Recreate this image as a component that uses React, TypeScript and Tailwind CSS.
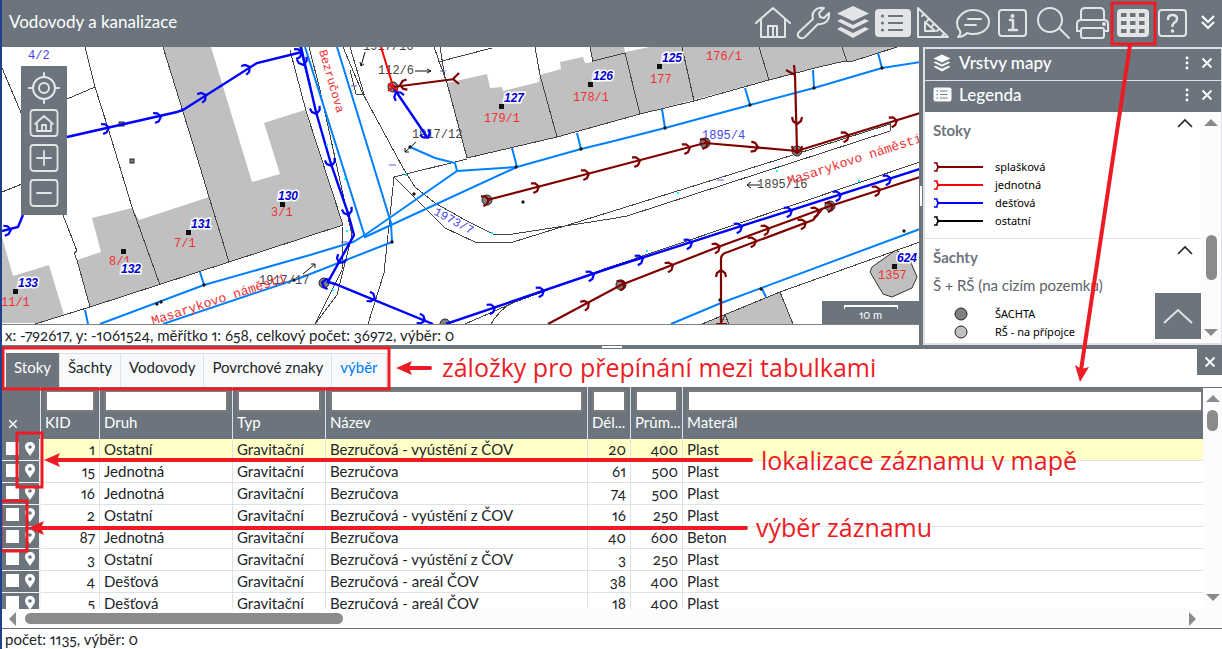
import React from "react";

const MAROON = "#800000";
const BLUE = "#0000ff";
const WATER = "#0080ff";

const S = { fill: "none", stroke: "#e2e4e6", strokeWidth: 2, strokeLinecap: "round", strokeLinejoin: "round" } as const;

const tools: { name: string; art: React.ReactNode }[] = [
  { name: "Domů", art: <path {...S} d="M3 23 20 8 37 23M8 19V37H32V19M15 37V26H24V37M20 27V37" /> },
  {
    name: "Nástroje",
    art: <path {...S} d="M6 32 20 19C18 12 23 7 31 8L26 13 27 17 31 18 36 13C37 20 32 25 25 24L12 37C8 40 2 36 6 32Z" />,
  },
  {
    name: "Vrstvy",
    art: (
      <g fill="#e2e4e6">
        <path d="M20 6 36 13.500 20 21 4 13.500Z" />
        <path d="M4 21 8 19 20 25 32 19 36 21 20 29Z" />
        <path d="M4 29 8 27 20 33 32 27 36 29 20 38Z" />
      </g>
    ),
  },
  {
    name: "Legenda",
    art: (
      <g>
        <rect x="2" y="9" width="36" height="28" rx="4" fill="#e2e4e6" />
        <path d="M15 16H30M15 23H30M15 30H30" stroke="#6c757d" strokeWidth="2" />
        <g fill="#6c757d"><circle cx="9.500" cy="16" r="1.600" /><circle cx="9.500" cy="23" r="1.600" /><circle cx="9.500" cy="30" r="1.600" /></g>
      </g>
    ),
  },
  { name: "Měření", art: <path {...S} d="M5 8V37H35ZM12 22V31H22ZM11 14 9 16M16 19 14 21M21 24 19 26M26 29 24 31M31 34 29 36" /> },
  { name: "Poznámky", art: <path {...S} d="M7 31C3 26 3 20 7 16 11 11 16 10 20 10 29 10 36 15 36 22 36 29 29 34 20 34 18 34 16 34 14 33 11 36 8 37 5 37 7 35 8 33 7 31ZM15 19H28M12 25H23" /> },
  { name: "Informace", art: <g {...S}><rect x="6" y="10" width="27" height="26" rx="3" /><path strokeWidth="2.500" d="M17 20H20V30M16 30H24" /><circle cx="19.500" cy="16" r="1" fill="#e2e4e6" /></g> },
  { name: "Hledat", art: <g {...S}><circle cx="17" cy="20" r="12" /><path d="M26 28 36 38" /></g> },
  { name: "Tisk", art: <g {...S}><path d="M8 20V12Q8 8 12 8H27Q31 8 31 12V20M8 31H4V24Q4 20 8 20H31Q35 20 35 24V31H31" /><rect x="8" y="28" width="23" height="10" rx="2" /><circle cx="31" cy="24" r="1" /></g> },
  {
    name: "Tabulky",
    art: (
      <g>
        <rect x="4" y="9" width="32" height="28" rx="4" fill="#e2e4e6" />
        <g fill="#6c757d">
          {[13, 21, 29].map((y) => [8, 17, 26].map((x) => <rect key={`${x}-${y}`} x={x} y={y} width="5.500" height="4" />))}
        </g>
      </g>
    ),
  },
  { name: "Nápověda", art: <g {...S}><rect x="6" y="10" width="27" height="26" rx="3" /><path strokeWidth="2.500" d="M15 19Q15 15 19.500 15 24 15 24 19 24 21 21 23 19.500 24 19.500 26" /><circle cx="19.500" cy="31" r=".8" fill="#e2e4e6" /></g> },
];

function Flow({ at, color }: { at: [number, number, number][]; color: string }) {
  return (
    <g fill="none" stroke={color} strokeWidth="2.200">
      {at.map(([x, y, a]) => (
        <path key={`${x}-${y}`} transform={`translate(${x} ${y}) rotate(${a})`} d="M-5-5-1-4 2 0-1 4-5 5" />
      ))}
    </g>
  );
}

function House({ n, x, y }: { n: string; x: number; y: number }) {
  return (
    <text x={x} y={y} fill="#0000cd" stroke="#fff" strokeWidth="3" paintOrder="stroke" className="text-[12px] font-bold italic">
      {n}
    </text>
  );
}

const nodes: [number, number][] = [[393, 87], [487, 200], [705, 143], [797, 151], [830, 206], [621, 285], [324, 283], [445, 324]];
const taps: [number, number][] = [[204, 285], [157, 304], [161, 302], [392, 242], [414, 194], [410, 147], [516, 167], [581, 149], [665, 128], [750, 105], [814, 88], [882, 68], [761, 289], [720, 300], [294, 280], [904, 231], [523, 202]];
const dots: [number, number][] = [[282, 204], [188, 232], [123, 251], [15, 291], [501, 106], [590, 84], [659, 66], [894, 266]];

function Map() {
  return (
    <svg viewBox="2 47 917 277" preserveAspectRatio="xMinYMin slice" className="block h-full w-full bg-white" role="img" aria-label="Mapa">
      <g fill="#c0c0c0">
        <path d="M163 47H211L252 182 280 174 264 123 305 110 343 225 229 262 90 307 77 260 101 252 92 218 132 208 139 220 209 197 197 157Z" />
        <path d="M2 237 13 276 49 265 64 315 40 323H2Z" />
        <path d="M447 83 487 74 490 88 502 87 503 91 539 82 540 75 561 69 560 62 583 57 585 63 593 62 590 47H624L625 52 650 47H897L850 62 845 61 819 67 769 80 640 114 557 137 467 158Z" />
        <path d="M702 324 780 292 793 324Z" />
        <path stroke="#333" d="M872 267 896 250 909 258 917 277 912 288 892 297 883 294 870 272Z" />
      </g>
      <g fill="none" stroke="#444" strokeWidth="1" shapeRendering="crispEdges">
        <path d="M85 47 95 87 108 128 132 207 160 285M95 87 67 99M2 68 22 115M2 192 22 184M63 215 77 251 74 253 77 260 90 307M163 47 197 157 209 197 229 262M35 324 90 307 229 262 343 225M290 50 306 111 343 225" />
        <path d="M434 47 447 83 467 158 557 137 640 114 694 101 769 80 819 67 845 61 850 62 897 47M440 47 445 78M438 62 492 48M535 47 540 75 557 137M590 47 593 62M593 61 625 53 640 114M682 47 694 101M759 47 769 80M842 47 847 62" />
        <path d="M343 47 362 92 403 168 415 187 435 203 465 220 493 234H513L610 219 627 216 890 131V124L793 155 610 212 513 242H475L445 228 427 210 394 177 467 159M350 47 364 94H356L350 70M394 177 384 273 368 324M343 227 342 270 315 324M352 235 337 295 315 324M610 267 920 162M465 324 515 302 610 267M491 324Q500 308 520 298M702 324 780 292 920 242M780 292 793 324M721 324 725 315M725 315 729 324M309 47 320 90 352 235" />
      </g>
      <g fill="none" stroke={WATER} strokeWidth="2">
        <path d="M100 324 204 285 310 255 353 242 365 235 457 171 517 167 581 149 610 142 665 128 750 105 814 88 882 68 920 62" />
        <path d="M305 47 365 237 517 167M337 47 391 223 392 242 300 278 163 324M410 147 435 158 455 163 457 171M512 148 517 167M577 133 581 149M662 109 665 128M745 88 750 105M813 70 814 88M878 53 882 68M200 272 204 285M85 310 88 324M671 324 721 303 920 229M762 289 766 297M300 47 310 86" />
      </g>
      <g className="font-['Liberation_Mono',monospace] text-[12px]">
        <g fill="#444">
          <text x="363" y="50">1917/16</text><text x="378" y="74">112/6</text><text x="412" y="138">1917/12</text><text x="259" y="284">1917/17</text><text x="757" y="188">1895/16</text>
        </g>
        <g fill="#4646e8">
          <text x="28" y="59">4/2</text><text x="702" y="139">1895/4</text><text transform="translate(433 214) rotate(28)">1973/7</text>
        </g>
        <g fill="#f03030">
          <text x="271" y="216">3/1</text><text x="174" y="247">7/1</text><text x="109" y="265">8/1</text><text x="1" y="306">11/1</text><text x="484" y="122">179/1</text><text x="573" y="101">178/1</text><text x="650" y="83">177</text><text x="706" y="60">176/1</text><text x="878" y="279">1357</text>
          <g className="text-[13px]">
            <text transform="translate(153 325) rotate(-18)">Masarykovo náměstí</text>
            <text transform="translate(789 185) rotate(-18)">Masarykovo náměstí</text>
          </g>
          <text transform="translate(319 51) rotate(74)">Bezručova</text>
        </g>
      </g>
      <g fill="#808080" stroke="#222">{nodes.map(([x, y]) => <circle key={`${x}-${y}`} cx={x} cy={y} r="5" />)}<rect x="119" y="122" width="5" height="4" /><rect x="130" y="159" width="4" height="4" /></g>
      <g fill="none" stroke={MAROON} strokeWidth="2.200">
        <path d="M487 200 610 168 705 143 797 151 920 113M794 65 795 75 797 151M786 70 795 75M548 324 621 285 718 247 830 206 920 177M721 324V258Q722 253 728 252L813 220 823 208M716 324H727M455 79 393 87M459 73 453 79 459 84" />
      </g>
      <Flow color={MAROON} at={[[487, 200, -14], [537, 187, -14], [587, 174, -14], [638, 161, -14], [688, 148, -14], [706, 143, -14], [756, 147, 4], [847, 136, -17], [895, 121, -17], [797, 122, 90], [797, 151, 90], [587, 304, -28], [623, 284, -22], [671, 266, -20], [718, 247, -20], [767, 229, -20], [817, 211, -20], [831, 206, -20], [878, 190, -18], [721, 272, -90], [754, 241, -18], [804, 223, -20], [402, 85, 175]]} />
      <g fill="none" stroke={BLUE} strokeWidth="2.400">
        <path d="M67 137 177 112 183 110 257 63 302 52M301 47 316 112 331 164 348 213 354 235 328 282 335 284 433 324M2 231 18 227 23 215M393 87 427 137M446 324 610 268 920 169" />
      </g>
      <Flow color={BLUE} at={[[107, 128, -12], [159, 117, -12], [204, 96, -30], [248, 68, -30], [300, 53, -12], [303, 63, 75], [316, 112, 75], [331, 164, 75], [348, 213, 75], [340, 261, 120], [324, 283, 195], [373, 298, 20], [423, 320, 20], [9, 230, -8], [397, 94, 235], [427, 136, 55], [493, 308, -18], [542, 291, -18], [592, 275, -18], [641, 259, -18], [690, 243, -18], [740, 227, -18], [790, 211, -18], [839, 195, -18], [889, 179, -18]]} />
      <path d="M381 47 393 86M388 91 393 87 398 91M388 84 393 87" stroke="#f00" strokeWidth="2" fill="none" />
      <g fill="#111">{dots.map(([x, y]) => <rect key={x} x={x - 2} y={y - 2} width="5" height="5" />)}</g>
      <g fill="#804020" stroke="#000">{taps.map(([x, y]) => <circle key={x} cx={x} cy={y} r="1.200" />)}</g>
      <g fill="none" stroke="#111"><path d="M415 71H431M427 69 431 71 427 73M365 52 361 66M360 62 361 66 364 64M416 142 405 152V148M405 152H409M303 274 315 264H311M315 264V268M760 185H747M751 182 747 185 751 188" /></g>
      <g stroke="#6060e0"><path d="M440 71H446M389 165H396M341 242H348M717 180H724M351 86H357" /></g>
      <g fill="#00ffff"><path d="M326 144h2v2h-2zM344 178h2v2h-2zM346 230h2v2h-2zM332 289h2v2h-2zM405 174h2v2h-2zM491 232h2v2h-2zM677 192h2v2h-2zM776 170h2v2h-2zM858 180h2v2h-2zM646 250h2v2h-2z" /></g>
      <g className="font-['Liberation_Sans',sans-serif]">
        <House n="130" x={278} y={200} /><House n="131" x={191} y={228} /><House n="132" x={121} y={273} /><House n="133" x={18} y={287} /><House n="127" x={504} y={102} /><House n="126" x={593} y={80} /><House n="125" x={662} y={62} /><House n="624" x={897} y={262} />
      </g>
    </svg>
  );
}

function Cross({ size = "size-3" }: { size?: string }) {
  return <svg viewBox="0 0 12 12" className={size}><path d="M1.500 1.500 10.500 10.500M10.500 1.500 1.500 10.500" stroke="#fff" strokeWidth="1.800" /></svg>;
}

function PanelHead({ title, icon }: { title: string; icon: React.ReactNode }) {
  return (
    <div className="flex h-8 shrink-0 items-center border-t border-[#dee2e6] bg-[#6c757d] pr-2 pb-1 pl-2 text-white">
      <span className="flex w-[26px] shrink-0">{icon}</span>
      <h2 className="flex-1 text-[17px] leading-5 font-medium">{title}</h2>
      <button type="button" aria-label={`${title}: nabídka`} className="px-3">
        <svg viewBox="0 0 4 14" className="h-3.5 w-1" fill="#fff"><circle cx="2" cy="2" r="1.400" /><circle cx="2" cy="7" r="1.400" /><circle cx="2" cy="12" r="1.400" /></svg>
      </button>
      <button type="button" aria-label={`${title}: zavřít`}><Cross /></button>
    </div>
  );
}

function Arrow({ d }: { d: string }) {
  return <svg viewBox="0 0 14 14" className="size-3.5 shrink-0" fill="#8b8b8b"><path d={d} /></svg>;
}
const UP = "M0 10 7 3 14 10Z";
const DOWN = "M0 4 7 11 14 4Z";
const LEFT = "M10 0 3 7 10 14Z";
const RIGHT = "M4 0 11 7 4 14Z";

function Fold({ label }: { label: string }) {
  return (
    <button type="button" aria-label={label} className="self-start">
      <svg viewBox="0 0 16 10" className="h-2.5 w-4"><path d="M1 9 8 2 15 9" fill="none" stroke="#212529" strokeWidth="1.600" /></svg>
    </button>
  );
}

const sewers = [["splašková", MAROON], ["jednotná", "#ff0000"], ["dešťová", BLUE], ["ostatní", "#000000"]];
const shafts = [["ŠACHTA", "#808080"], ["RŠ - na přípojce", "#c0c0c0"]];

function Legend() {
  return (
    <div className="relative flex min-h-0 flex-1 overflow-hidden bg-white">
      <div className="flex-1">
        <section className="border-b border-[#dee2e6] pt-1.5 pr-2 pb-2 pl-2">
          <div className="flex h-10 justify-between">
            <h3 className="pt-0.5 text-[15px] leading-5 font-bold text-[#6c757d]">Stoky</h3>
            <Fold label="Sbalit Stoky" />
          </div>
          <ul className="font-['Noto_Sans',sans-serif] text-[11px] leading-[18px] text-black">
            {sewers.map(([t, c]) => (
              <li key={t} className="flex items-center">
                <svg viewBox="0 0 62 12" className="h-3 w-[62px]" fill="none" stroke={c}><path strokeWidth="2" d="M4 6H50" /><path strokeWidth="1.500" d="M1 2H4V4L6 6 4 8V10H1" /></svg>
                {t}
              </li>
            ))}
          </ul>
        </section>
        <section className="pt-1.5 pr-2 pl-2">
          <div className="flex h-[30px] justify-between">
            <h3 className="pt-0.5 text-[15px] leading-5 font-bold text-[#6c757d]">Šachty</h3>
            <Fold label="Sbalit Šachty" />
          </div>
          <p className="text-[15px] leading-5 text-[#5b6269]">Š + RŠ (na cizím pozemku)</p>
          <ul className="pt-2.5 font-['Noto_Sans',sans-serif] text-[11px] leading-[18px] text-black">
            {shafts.map(([t, c]) => (
              <li key={t} className="flex items-center">
                <svg viewBox="0 0 62 14" className="h-3.5 w-[62px]"><circle cx="28" cy="7" r="6" fill={c} stroke="#222" /></svg>
                {t}
              </li>
            ))}
          </ul>
        </section>
      </div>
      <div className="relative flex w-5 flex-col items-center justify-between bg-[#fcfcfc] py-1">
        <Arrow d={UP} />
        <span className="absolute top-[123px] h-[45px] w-[11px] rounded-full bg-[#8b8b8b]" />
        <Arrow d={DOWN} />
      </div>
      <button type="button" aria-label="Nahoru" className="absolute right-5 bottom-1 flex size-[46px] items-center justify-center bg-[#6c757d]">
        <svg viewBox="0 0 30 16" className="h-4 w-[30px]"><path d="M1 15 15 2 29 15" fill="none" stroke="#e2e4e6" strokeWidth="2" /></svg>
      </button>
    </div>
  );
}

const mapTools = [
  { name: "Poloha", art: <g {...S}><circle cx="16" cy="16" r="11" /><circle cx="16" cy="16" r="5" /><path d="M16 1V5M16 27V31M1 16H5M27 16H31" /></g> },
  { name: "Celá mapa", art: <g {...S} strokeWidth="1.800"><rect x="2.500" y="3" width="27" height="26" rx="3" /><path d="M7 17 16 9 25 17M9 16V24H23V16M14 24V18H18V24" /></g> },
  { name: "Přiblížit", art: <g {...S} strokeWidth="1.800"><rect x="2.500" y="3" width="27" height="26" rx="3" /><path d="M9 16H23M16 9V23" /></g> },
  { name: "Oddálit", art: <g {...S} strokeWidth="1.800"><rect x="2.500" y="3" width="27" height="26" rx="3" /><path d="M9 16H23" /></g> },
];

const rows = [
  [1, "Ostatní", "Bezručová - vyústění z ČOV", 20, 400, "Plast"],
  [15, "Jednotná", "Bezručova", 61, 500, "Plast"],
  [16, "Jednotná", "Bezručova", 74, 500, "Plast"],
  [2, "Ostatní", "Bezručová - vyústění z ČOV", 16, 250, "Plast"],
  [87, "Jednotná", "Bezručova", 40, 600, "Beton"],
  [3, "Ostatní", "Bezručová - vyústění z ČOV", 3, 250, "Plast"],
  [4, "Dešťová", "Bezručová - areál ČOV", 38, 400, "Plast"],
  [5, "Dešťová", "Bezručová - areál ČOV", 18, 400, "Plast"],
] as const;
const heads = ["KID", "Druh", "Typ", "Název", "Dél...", "Prům...", "Materál"];
const tabs = ["Stoky", "Šachty", "Vodovody", "Povrchové znaky", "výběr"];

function Grid() {
  const cell = "truncate border-r border-b border-[#dee2e6] px-1";
  return (
    <table className="w-full table-fixed border-separate border-spacing-0 text-[15px] leading-[21px] text-[#212529]">
      <colgroup>
        <col className="w-[39px]" /><col className="w-[59px]" /><col className="w-[133px]" /><col className="w-[93px]" /><col className="w-[262px]" /><col className="w-[43px]" /><col className="w-[52px]" /><col />
      </colgroup>
      <thead>
        <tr className="h-[52px] bg-[#6c757d] text-left text-white">
          <th className="border-r border-[#dee2e6] pb-2 pl-1 align-bottom">
            <button type="button" aria-label="Zrušit výběr" className="block p-0.5"><Cross size="size-2.5" /></button>
          </th>
          {heads.map((h) => (
            <th key={h} className="overflow-hidden border-r border-[#dee2e6] px-1 pt-[3px] align-top font-normal last:border-r-0 last:pr-0">
              <input aria-label={`Filtr ${h}`} className="block h-[22px] w-full border-2 border-[#7b7b7b] bg-white" />
              <span className="-mr-1 block truncate">{h}</span>
            </th>
          ))}
        </tr>
      </thead>
      <tbody>
        {rows.map(([id, kind, name, len, dia, mat], i) => (
          <tr key={id} className={i === 0 ? "h-[22px] bg-[#ffffc8]" : "h-[22px] bg-white"}>
            <td className="border-r-2 border-b border-[#f4f4f4] bg-[#6c757d] p-0">
              <div className="flex items-center gap-1.5 pb-0.5 pl-1">
                <input type="checkbox" aria-label={`Vybrat ${id}`} className="size-[13px] appearance-none bg-white" />
                <button type="button" aria-label={`Lokalizovat ${id}`}>
                  <svg viewBox="0 0 10 14" className="h-3.5 w-2.5"><path fill="#fff" fillRule="evenodd" d="M5 0C8 0 10 2 10 5 10 8 6.500 11 5 14 3.500 11 0 8 0 5 0 2 2 0 5 0ZM5 3.200A1.800 1.800 0 1 0 5 6.800 1.800 1.800 0 1 0 5 3.200Z" /></svg>
                </button>
              </div>
            </td>
            <td className={`${cell} text-right`}>{id}</td>
            <td className={cell}>{kind}</td>
            <td className={cell}>Gravitační</td>
            <td className={cell}>{name}</td>
            <td className={`${cell} text-right`}>{len}</td>
            <td className={`${cell} text-right`}>{dia}</td>
            <td className="border-b border-[#dee2e6] px-1">{mat}</td>
          </tr>
        ))}
      </tbody>
    </table>
  );
}

function Notes() {
  return (
    <svg className="pointer-events-none absolute inset-y-0 -left-0.5 h-full w-full overflow-visible" fill="none" stroke="#ed1c24">
      <g strokeWidth="3">
        <rect x="1112" y="3" width="43" height="41" /><rect x="3" y="348" width="386" height="41" /><rect x="17" y="433" width="25" height="54" /><rect x="1" y="501" width="26" height="50" />
      </g>
      <g strokeWidth="4" strokeLinecap="round"><path d="M1130 45 1081 370M408 368H430M54 460H751M38 528H746" /></g>
      <g fill="#ed1c24" stroke="none">
        <path d="M1080 382 1075 365 1081 369 1089 367ZM396 368 412 361 409 368 412 375ZM44 460 60 453 57 460 60 467ZM28 528 44 521 41 528 44 535Z" />
        <g className="font-['Open_Sans',sans-serif] text-[25px]">
          <text x="442" y="377">záložky pro přepínání mezi tabulkami</text>
          <text x="761" y="470">lokalizace záznamu v mapě</text>
          <text x="756" y="537">výběr záznamu</text>
        </g>
      </g>
    </svg>
  );
}

export default function App() {
  return (
    <div className="relative flex h-screen flex-col overflow-hidden border-l-2 border-[#1f3f8f] bg-white font-[Lato,sans-serif] text-[#212529] oldstyle-nums proportional-nums">
      <header className="flex h-[47px] shrink-0 items-center bg-[#6c757d] pb-2 pl-[7px]">
        <h1 className="flex-1 pt-1 text-[17px] leading-6 text-white">Vodovody a kanalizace</h1>
        <nav className="flex items-center" aria-label="Nástroje">
          {tools.map((t) => (
            <button key={t.name} type="button" aria-label={t.name} className="size-10">
              <svg viewBox="0 0 40 40" className="size-10">{t.art}</svg>
            </button>
          ))}
          <button type="button" aria-label="Více" className="flex w-[29px] justify-center pt-1">
            <svg viewBox="0 0 16 16" className="size-4"><path d="M2 2 8 8 14 2M2 8 8 14 14 8" fill="none" stroke="#fff" strokeWidth="2" /></svg>
          </button>
        </nav>
      </header>

      <main className="flex min-h-0 flex-[298]">
        <div className="flex min-w-0 flex-1 flex-col">
          <div className="relative min-h-0 flex-1 overflow-hidden">
            <Map />
            <div className="absolute top-[19px] left-[19px] flex w-[46px] flex-col items-center gap-[3px] bg-[#6c757d] pt-1.5 pb-1.5">
              {mapTools.map((t) => (
                <button key={t.name} type="button" aria-label={t.name} className="flex">
                  <svg viewBox="0 0 32 32" className="size-8">{t.art}</svg>
                </button>
              ))}
            </div>
            <div className="absolute right-0 bottom-0 flex h-[23px] w-[97px] flex-col items-center bg-[#6c757d] pt-1 text-[11px] leading-3 text-white">
              <span className="h-1 w-[54px] border-x border-t-2 border-white" />
              10 m
            </div>
          </div>
          <div className="h-[21px] shrink-0 border-t border-[#808080] pl-[3px] text-[15px] leading-5">x: -792617, y: -1061524, měřítko 1: 658, celkový počet: 36972, výběr: 0</div>
        </div>
        <div className="flex w-1 shrink-0 items-center bg-[#6c757d]"><span className="ml-px h-5 w-0.5 bg-white" /></div>
        <aside className="flex w-[299px] shrink-0 flex-col border-t border-r border-b-2 border-l-2 border-[#dee2e6]">
          <PanelHead title="Vrstvy mapy" icon={<svg viewBox="3 5 34 34" className="size-[18px] brightness-110">{tools[2].art}</svg>} />
          <PanelHead title="Legenda" icon={<svg viewBox="1 6 38 34" className="size-[19px] brightness-110">{tools[3].art}</svg>} />
          <Legend />
        </aside>
      </main>

      <div className="flex h-1 shrink-0 items-center justify-center bg-[#6c757d]"><span className="h-0.5 w-5 bg-white" /></div>

      <section className="flex min-h-0 flex-[300] flex-col">
        <div className="flex h-[38px] shrink-0 items-start justify-between">
          <div role="tablist" className="flex h-full items-stretch pt-1 pl-1">
            {tabs.map((t, i) => (
              <button
                key={t}
                type="button"
                role="tab"
                aria-selected={i === 0}
                className={
                  i === 0
                    ? "bg-[#6c757d] px-2 pb-1.5 text-[15px] text-white"
                    : i === 4
                      ? "border-x border-t border-[#dee2e6] bg-[#f8f9fa] px-2 pb-1.5 text-[15px] text-[#007bff]"
                      : "border-t border-l border-[#dee2e6] bg-[#f8f9fa] px-2 pb-1.5 text-[15px]"
                }
              >
                {t}
              </button>
            ))}
          </div>
          <button type="button" aria-label="Zavřít tabulky" className="flex h-[26px] w-[25px] items-center justify-center bg-[#6c757d]"><Cross /></button>
        </div>
        <div className="flex min-h-0 flex-1 border-b border-[#6c757d]">
          <div className="flex min-w-0 flex-1 flex-col">
            <div className="min-h-0 flex-1 overflow-hidden"><Grid /></div>
            <div className="flex h-[19px] shrink-0 items-center bg-[#fcfcfc] pr-1 pl-1">
              <Arrow d={LEFT} />
              <div className="flex-1 px-[5px]"><div className="h-[11px] w-[27.500%] rounded-full bg-[#8b8b8b]" /></div>
              <Arrow d={RIGHT} />
            </div>
          </div>
          <div className="flex w-[19px] shrink-0 flex-col items-center border-t border-[#6c757d] bg-[#fcfcfc] pt-1 pb-6">
            <Arrow d={UP} />
            <div className="flex-1 pt-1"><div className="h-[21px] w-[11px] rounded-full bg-[#8b8b8b]" /></div>
            <Arrow d={DOWN} />
          </div>
        </div>
        <footer className="h-5 shrink-0 pl-[3px] text-[15px] leading-5">počet: 1135, výběr: 0</footer>
      </section>
      <Notes />
    </div>
  );
}
